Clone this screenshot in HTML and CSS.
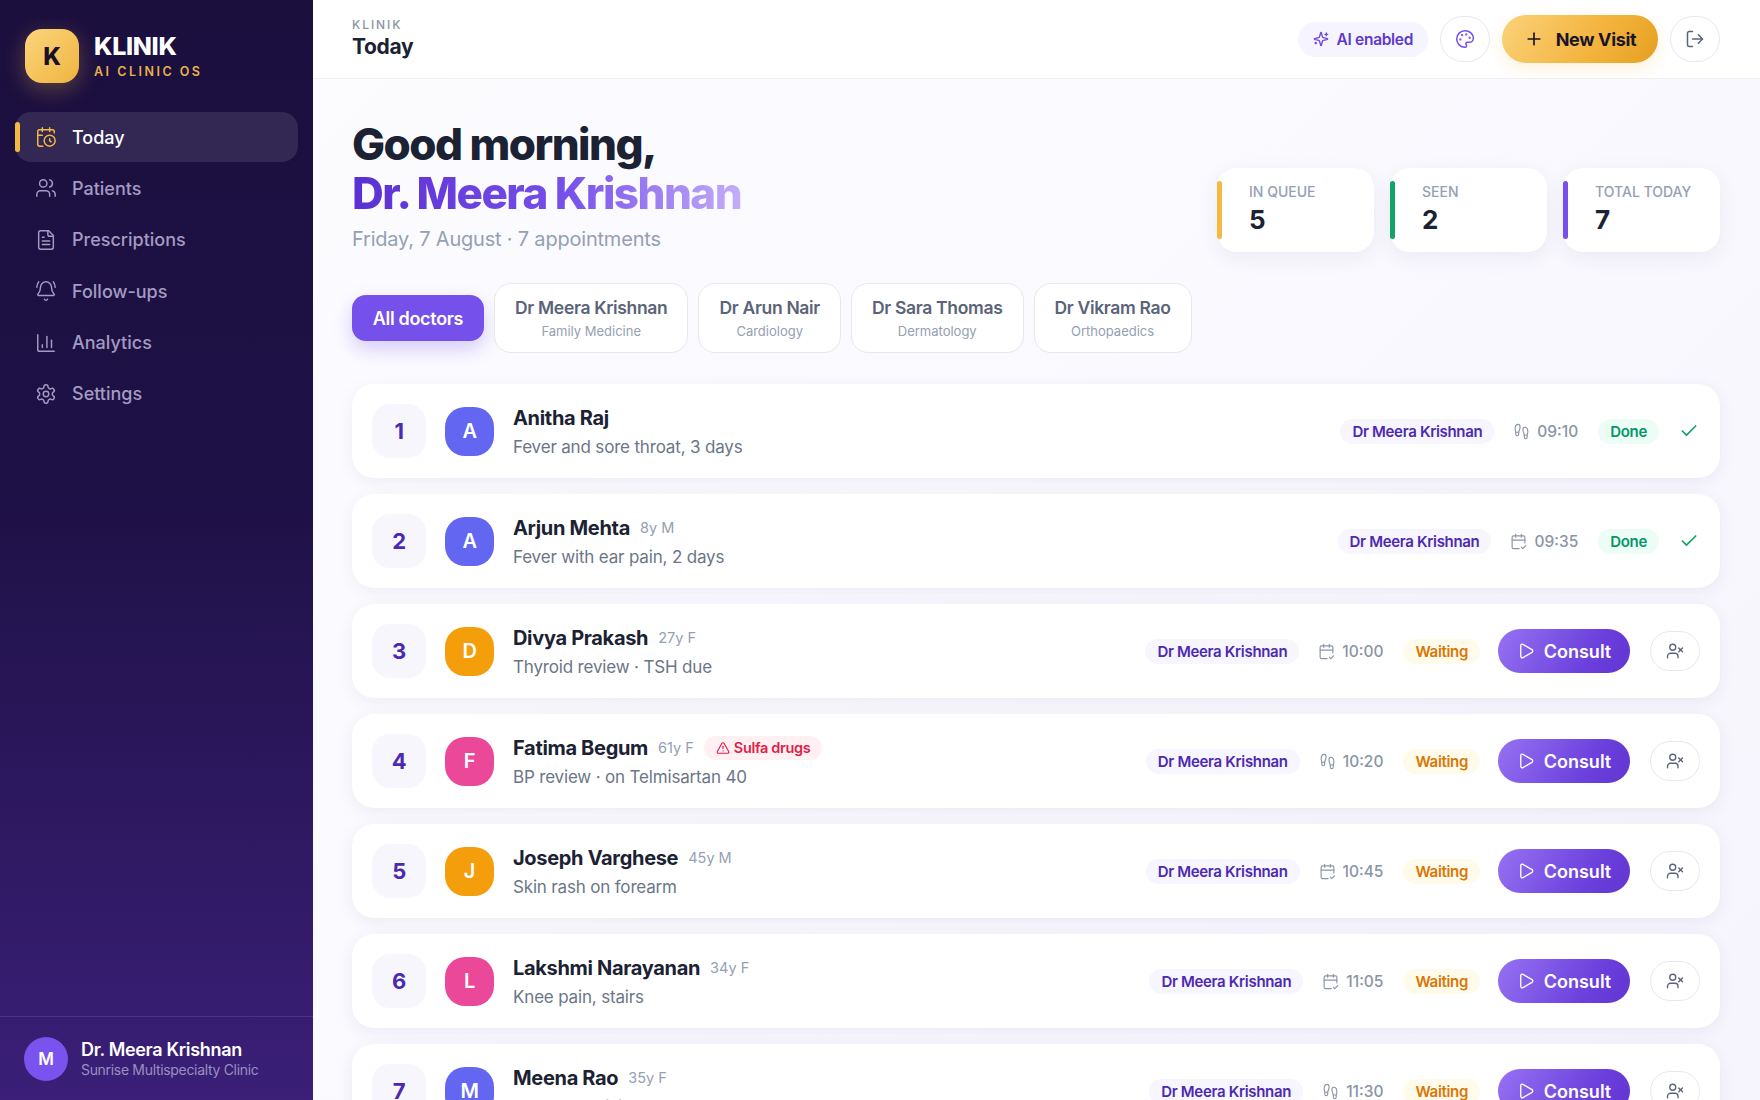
FILE: index.html
```html
<!DOCTYPE html>
<html>
<head>
    <title>Klinik - Today</title>
    <link rel="stylesheet" href="styles.css">
</head>
<body>
    <svg class="icon-defs" width="0" height="0">
        <symbol id="i-today" viewBox="0 0 24 24"><path d="M16 14v2.2l1.6 1"/><path d="M16 2v4"/><path d="M21 7.5V6a2 2 0 0 0-2-2H5a2 2 0 0 0-2 2v14a2 2 0 0 0 2 2h3.5"/><path d="M3 10h5"/><path d="M8 2v4"/><circle cx="16" cy="16" r="6"/></symbol>
        <symbol id="i-users" viewBox="0 0 24 24"><path d="M16 21v-2a4 4 0 0 0-4-4H6a4 4 0 0 0-4 4v2"/><path d="M16 3.128a4 4 0 0 1 0 7.744"/><path d="M22 21v-2a4 4 0 0 0-3-3.87"/><circle cx="9" cy="7" r="4"/></symbol>
        <symbol id="i-file" viewBox="0 0 24 24"><path d="M15 2H6a2 2 0 0 0-2 2v16a2 2 0 0 0 2 2h12a2 2 0 0 0 2-2V7Z"/><path d="M14 2v4a2 2 0 0 0 2 2h4"/><path d="M10 9H8"/><path d="M16 13H8"/><path d="M16 17H8"/></symbol>
        <symbol id="i-bell" viewBox="0 0 24 24"><path d="M10.268 21a2 2 0 0 0 3.464 0"/><path d="M22 8c0-2.3-.8-4.3-2-6"/><path d="M3.262 15.326A1 1 0 0 0 4 17h16a1 1 0 0 0 .74-1.673C19.41 13.956 18 12.499 18 8A6 6 0 0 0 6 8c0 4.499-1.411 5.956-2.738 7.326"/><path d="M4 2C2.8 3.7 2 5.7 2 8"/></symbol>
        <symbol id="i-chart" viewBox="0 0 24 24"><path d="M3 3v16a2 2 0 0 0 2 2h16"/><path d="M18 17V9"/><path d="M13 17V5"/><path d="M8 17v-3"/></symbol>
        <symbol id="i-gear" viewBox="0 0 24 24"><path d="M12.22 2h-.44a2 2 0 0 0-2 2v.18a2 2 0 0 1-1 1.73l-.43.25a2 2 0 0 1-2 0l-.15-.08a2 2 0 0 0-2.73.73l-.22.38a2 2 0 0 0 .73 2.73l.15.1a2 2 0 0 1 1 1.72v.51a2 2 0 0 1-1 1.74l-.15.09a2 2 0 0 0-.73 2.73l.22.38a2 2 0 0 0 2.73.73l.15-.08a2 2 0 0 1 2 0l.43.25a2 2 0 0 1 1 1.73V20a2 2 0 0 0 2 2h.44a2 2 0 0 0 2-2v-.18a2 2 0 0 1 1-1.73l.43-.25a2 2 0 0 1 2 0l.15.08a2 2 0 0 0 2.73-.73l.22-.39a2 2 0 0 0-.73-2.73l-.15-.08a2 2 0 0 1-1-1.74v-.5a2 2 0 0 1 1-1.74l.15-.09a2 2 0 0 0 .73-2.73l-.22-.38a2 2 0 0 0-2.73-.73l-.15.08a2 2 0 0 1-2 0l-.43-.25a2 2 0 0 1-1-1.73V4a2 2 0 0 0-2-2z"/><circle cx="12" cy="12" r="3"/></symbol>
        <symbol id="i-sparkles" viewBox="0 0 24 24"><path d="M9.937 15.5A2 2 0 0 0 8.5 14.063l-6.135-1.582a.5.5 0 0 1 0-.962L8.5 9.936A2 2 0 0 0 9.937 8.5l1.582-6.135a.5.5 0 0 1 .963 0L14.063 8.5A2 2 0 0 0 15.5 9.937l6.135 1.581a.5.5 0 0 1 0 .964L15.5 14.063a2 2 0 0 0-1.437 1.437l-1.582 6.135a.5.5 0 0 1-.963 0z"/><path d="M20 3v4"/><path d="M22 5h-4"/><path d="M4 17v2"/><path d="M5 18H3"/></symbol>
        <symbol id="i-palette" viewBox="0 0 24 24"><path d="M12 22a1 1 0 0 1 0-20 10 9 0 0 1 10 9 5 5 0 0 1-5 5h-2.25a1.75 1.75 0 0 0-1.4 2.8l.3.4a1.75 1.75 0 0 1-1.4 2.8z"/><circle cx="13.5" cy="6.5" r=".5" fill="currentColor"/><circle cx="17.5" cy="10.5" r=".5" fill="currentColor"/><circle cx="6.5" cy="12.5" r=".5" fill="currentColor"/><circle cx="8.5" cy="7.5" r=".5" fill="currentColor"/></symbol>
        <symbol id="i-plus" viewBox="0 0 24 24"><path d="M5 12h14"/><path d="M12 5v14"/></symbol>
        <symbol id="i-logout" viewBox="0 0 24 24"><path d="m16 17 5-5-5-5"/><path d="M21 12H9"/><path d="M9 21H5a2 2 0 0 1-2-2V5a2 2 0 0 1 2-2h4"/></symbol>
        <symbol id="i-steps" viewBox="0 0 24 24"><path d="M4 16v-2.38C4 11.5 2.97 10.5 3 8c.03-2.72 1.49-6 4.5-6C9.37 2 10 3.8 10 5.5c0 3.11-2 5.66-2 8.68V16a2 2 0 1 1-4 0Z"/><path d="M20 20v-2.38c0-2.12 1.03-3.12 1-5.62-.03-2.72-1.49-6-4.5-6C14.63 6 14 7.8 14 9.5c0 3.11 2 5.66 2 8.68V20a2 2 0 1 0 4 0Z"/><path d="M16 17h4"/><path d="M4 13h4"/></symbol>
        <symbol id="i-booked" viewBox="0 0 24 24"><path d="M8 2v4"/><path d="M16 2v4"/><path d="M21 14V6a2 2 0 0 0-2-2H5a2 2 0 0 0-2 2v14a2 2 0 0 0 2 2h8"/><path d="M3 10h18"/><path d="m16 20 2 2 4-4"/></symbol>
        <symbol id="i-check" viewBox="0 0 24 24"><path d="M20 6 9 17l-5-5"/></symbol>
        <symbol id="i-play" viewBox="0 0 24 24"><path d="M5 5a2 2 0 0 1 3.008-1.728l11.997 6.998a2 2 0 0 1 .003 3.458l-12 7A2 2 0 0 1 5 19z"/></symbol>
        <symbol id="i-userx" viewBox="0 0 24 24"><path d="M16 21v-2a4 4 0 0 0-4-4H6a4 4 0 0 0-4 4v2"/><circle cx="9" cy="7" r="4"/><line x1="17" x2="22" y1="8" y2="13"/><line x1="22" x2="17" y1="8" y2="13"/></symbol>
        <symbol id="i-alert" viewBox="0 0 24 24"><path d="m21.73 18-8-14a2 2 0 0 0-3.48 0l-8 14A2 2 0 0 0 4 21h16a2 2 0 0 0 1.73-3"/><path d="M12 9v4"/><path d="M12 17h.01"/></symbol>
    </svg>

    <aside class="sidebar">
        <div class="brand">
            <div class="brand-logo">K</div>
            <div>
                <div class="brand-name">KLINIK</div>
                <div class="brand-tag">AI CLINIC OS</div>
            </div>
        </div>
        <nav class="nav">
            <a class="nav-item nav-active"><svg class="icon nav-icon"><use href="#i-today"/></svg>Today</a>
            <a class="nav-item"><svg class="icon nav-icon"><use href="#i-users"/></svg>Patients</a>
            <a class="nav-item"><svg class="icon nav-icon"><use href="#i-file"/></svg>Prescriptions</a>
            <a class="nav-item"><svg class="icon nav-icon"><use href="#i-bell"/></svg>Follow-ups</a>
            <a class="nav-item"><svg class="icon nav-icon"><use href="#i-chart"/></svg>Analytics</a>
            <a class="nav-item"><svg class="icon nav-icon"><use href="#i-gear"/></svg>Settings</a>
        </nav>
        <div class="side-user">
            <div class="side-avatar">M</div>
            <div>
                <div class="side-name">Dr. Meera Krishnan</div>
                <div class="side-clinic">Sunrise Multispecialty Clinic</div>
            </div>
        </div>
    </aside>

    <div class="main">
        <header class="topbar">
            <div class="topbar-title">
                <div class="kicker">KLINIK</div>
                <div class="page-name">Today</div>
            </div>
            <div class="topbar-actions">
                <div class="ai-pill"><svg class="icon icon-sm"><use href="#i-sparkles"/></svg>AI enabled</div>
                <button class="round-btn palette-btn"><svg class="icon icon-md"><use href="#i-palette"/></svg></button>
                <button class="new-visit"><svg class="icon icon-plus"><use href="#i-plus"/></svg>New Visit</button>
                <button class="round-btn"><svg class="icon icon-md"><use href="#i-logout"/></svg></button>
            </div>
        </header>

        <main class="content">
            <section class="hero">
                <div>
                    <h1 class="greeting">Good morning,<br><span class="greeting-name">Dr. Meera Krishnan</span></h1>
                    <div class="hero-sub">Friday, 7 August · 7 appointments</div>
                </div>
                <div class="stats">
                    <div class="stat stat-gold"><div class="stat-label">IN QUEUE</div><div class="stat-value">5</div></div>
                    <div class="stat stat-green"><div class="stat-label">SEEN</div><div class="stat-value">2</div></div>
                    <div class="stat stat-violet"><div class="stat-label">TOTAL TODAY</div><div class="stat-value">7</div></div>
                </div>
            </section>

            <section class="doctor-chips">
                <button class="chip-all">All doctors</button>
                <button class="chip"><span class="chip-name">Dr Meera Krishnan</span><span class="chip-spec">Family Medicine</span></button>
                <button class="chip"><span class="chip-name">Dr Arun Nair</span><span class="chip-spec">Cardiology</span></button>
                <button class="chip"><span class="chip-name">Dr Sara Thomas</span><span class="chip-spec">Dermatology</span></button>
                <button class="chip"><span class="chip-name">Dr Vikram Rao</span><span class="chip-spec">Orthopaedics</span></button>
            </section>

            <section class="queue">
                <div class="row">
                    <div class="row-num">1</div>
                    <div class="row-avatar av-indigo">A</div>
                    <div class="row-info">
                        <div class="row-head"><span class="row-name">Anitha Raj</span></div>
                        <div class="row-reason">Fever and sore throat, 3 days</div>
                    </div>
                    <div class="doc-pill">Dr Meera Krishnan</div>
                    <div class="row-time"><svg class="icon icon-time"><use href="#i-steps"/></svg>09:10</div>
                    <div class="status status-done">Done</div>
                    <svg class="icon row-check"><use href="#i-check"/></svg>
                </div>
                <div class="row">
                    <div class="row-num">2</div>
                    <div class="row-avatar av-indigo">A</div>
                    <div class="row-info">
                        <div class="row-head"><span class="row-name">Arjun Mehta</span><span class="row-age">8y M</span></div>
                        <div class="row-reason">Fever with ear pain, 2 days</div>
                    </div>
                    <div class="doc-pill">Dr Meera Krishnan</div>
                    <div class="row-time"><svg class="icon icon-time"><use href="#i-booked"/></svg>09:35</div>
                    <div class="status status-done">Done</div>
                    <svg class="icon row-check"><use href="#i-check"/></svg>
                </div>
                <div class="row">
                    <div class="row-num">3</div>
                    <div class="row-avatar av-amber">D</div>
                    <div class="row-info">
                        <div class="row-head"><span class="row-name">Divya Prakash</span><span class="row-age">27y F</span></div>
                        <div class="row-reason">Thyroid review · TSH due</div>
                    </div>
                    <div class="doc-pill">Dr Meera Krishnan</div>
                    <div class="row-time"><svg class="icon icon-time"><use href="#i-booked"/></svg>10:00</div>
                    <div class="status status-waiting">Waiting</div>
                    <button class="consult"><svg class="icon icon-play"><use href="#i-play"/></svg>Consult</button>
                    <button class="noshow"><svg class="icon icon-noshow"><use href="#i-userx"/></svg></button>
                </div>
                <div class="row">
                    <div class="row-num">4</div>
                    <div class="row-avatar av-pink">F</div>
                    <div class="row-info">
                        <div class="row-head"><span class="row-name">Fatima Begum</span><span class="row-age">61y F</span><span class="allergy"><svg class="icon icon-alert"><use href="#i-alert"/></svg>Sulfa drugs</span></div>
                        <div class="row-reason">BP review · on Telmisartan 40</div>
                    </div>
                    <div class="doc-pill">Dr Meera Krishnan</div>
                    <div class="row-time"><svg class="icon icon-time"><use href="#i-steps"/></svg>10:20</div>
                    <div class="status status-waiting">Waiting</div>
                    <button class="consult"><svg class="icon icon-play"><use href="#i-play"/></svg>Consult</button>
                    <button class="noshow"><svg class="icon icon-noshow"><use href="#i-userx"/></svg></button>
                </div>
                <div class="row">
                    <div class="row-num">5</div>
                    <div class="row-avatar av-amber">J</div>
                    <div class="row-info">
                        <div class="row-head"><span class="row-name">Joseph Varghese</span><span class="row-age">45y M</span></div>
                        <div class="row-reason">Skin rash on forearm</div>
                    </div>
                    <div class="doc-pill">Dr Meera Krishnan</div>
                    <div class="row-time"><svg class="icon icon-time"><use href="#i-booked"/></svg>10:45</div>
                    <div class="status status-waiting">Waiting</div>
                    <button class="consult"><svg class="icon icon-play"><use href="#i-play"/></svg>Consult</button>
                    <button class="noshow"><svg class="icon icon-noshow"><use href="#i-userx"/></svg></button>
                </div>
                <div class="row">
                    <div class="row-num">6</div>
                    <div class="row-avatar av-pink">L</div>
                    <div class="row-info">
                        <div class="row-head"><span class="row-name">Lakshmi Narayanan</span><span class="row-age">34y F</span></div>
                        <div class="row-reason">Knee pain, stairs</div>
                    </div>
                    <div class="doc-pill">Dr Meera Krishnan</div>
                    <div class="row-time"><svg class="icon icon-time"><use href="#i-booked"/></svg>11:05</div>
                    <div class="status status-waiting">Waiting</div>
                    <button class="consult"><svg class="icon icon-play"><use href="#i-play"/></svg>Consult</button>
                    <button class="noshow"><svg class="icon icon-noshow"><use href="#i-userx"/></svg></button>
                </div>
                <div class="row">
                    <div class="row-num">7</div>
                    <div class="row-avatar av-indigo">M</div>
                    <div class="row-info">
                        <div class="row-head"><span class="row-name">Meena Rao</span><span class="row-age">35y F</span></div>
                        <div class="row-reason">Follow-up visit</div>
                    </div>
                    <div class="doc-pill">Dr Meera Krishnan</div>
                    <div class="row-time"><svg class="icon icon-time"><use href="#i-steps"/></svg>11:30</div>
                    <div class="status status-waiting">Waiting</div>
                    <button class="consult"><svg class="icon icon-play"><use href="#i-play"/></svg>Consult</button>
                    <button class="noshow"><svg class="icon icon-noshow"><use href="#i-userx"/></svg></button>
                </div>
            </section>
        </main>
    </div>
</body>
</html>
```

FILE: styles.css
```css
* {
    box-sizing: border-box;
}

html, body {
    height: 100%;
}

body {
    margin: 0;
    display: flex;
    overflow: hidden;
    font-family: "Inter", "Liberation Sans", sans-serif;
    letter-spacing: -0.02em;
    color: #1a2233;
    background: #f9f9fe;
}

button {
    font-family: inherit;
    letter-spacing: inherit;
    border: none;
    padding: 0;
}

.icon-defs {
    position: absolute;
}

.icon {
    fill: none;
    stroke: currentColor;
    stroke-width: 2;
    stroke-linecap: round;
    stroke-linejoin: round;
    flex: none;
}

/* sidebar */
.sidebar {
    width: 313px;
    flex: none;
    display: flex;
    flex-direction: column;
    background: linear-gradient(180deg, #1b0f3e 0%, #1e1146 45%, #3b1f78 100%);
}

.brand {
    display: flex;
    align-items: center;
    gap: 15px;
    padding: 29px 25px 0;
}

.brand-logo {
    width: 54px;
    height: 54px;
    border-radius: 17px;
    display: flex;
    align-items: center;
    justify-content: center;
    font-size: 24px;
    font-weight: 800;
    color: #1a1128;
    background: linear-gradient(135deg, #fbd57c, #f0b440);
    box-shadow: 0 6px 22px rgba(245, 185, 66, 0.3);
}

.brand-name {
    font-size: 25px;
    line-height: 28px;
    font-weight: 800;
    color: #fff;
}

.brand-tag {
    margin-top: 4px;
    font-size: 12.5px;
    line-height: 16px;
    font-weight: 600;
    letter-spacing: 0.2em;
    color: #e9b04a;
}

.nav {
    display: flex;
    flex-direction: column;
    gap: 1.4px;
    margin-top: 29px;
    padding: 0 15px;
}

.nav-item {
    position: relative;
    height: 50px;
    display: flex;
    align-items: center;
    gap: 15px;
    padding-left: 20px;
    border-radius: 16px;
    font-size: 18px;
    font-weight: 500;
    letter-spacing: 0;
    color: #a39bc2;
}

.nav-icon {
    width: 22px;
    height: 22px;
    stroke-width: 1.6;
}

.nav-active {
    color: #fff;
    background: rgba(255, 255, 255, 0.1);
}

.nav-active .nav-icon {
    color: #f5b942;
}

.nav-active::before {
    content: "";
    position: absolute;
    left: 0;
    top: 10px;
    bottom: 10px;
    width: 5px;
    border-radius: 3px;
    background: #f5b942;
}

.side-user {
    margin-top: auto;
    height: 84px;
    display: flex;
    align-items: center;
    gap: 13px;
    padding: 0 24px;
    border-top: 1px solid rgba(255, 255, 255, 0.1);
}

.side-avatar {
    width: 44px;
    height: 44px;
    border-radius: 50%;
    display: flex;
    align-items: center;
    justify-content: center;
    font-size: 17px;
    font-weight: 600;
    color: #fff;
    background: #7a52ee;
}

.side-name {
    font-size: 18px;
    line-height: 22px;
    font-weight: 600;
    color: #fff;
}

.side-clinic {
    font-size: 14px;
    line-height: 18px;
    color: #9a8fc0;
}

/* top bar */
.main {
    flex: 1;
    min-width: 0;
    display: flex;
    flex-direction: column;
}

.topbar {
    height: 79px;
    flex: none;
    display: flex;
    align-items: center;
    justify-content: space-between;
    padding: 0 40px 0 39px;
    background: #fff;
    border-bottom: 1px solid #eff0f5;
}

.kicker {
    font-size: 12px;
    line-height: 14px;
    font-weight: 500;
    letter-spacing: 0.16em;
    color: #8a94a6;
}

.page-name {
    margin-top: 2px;
    font-size: 21px;
    line-height: 26px;
    font-weight: 700;
}

.topbar-actions {
    display: flex;
    align-items: center;
    gap: 12px;
}

.ai-pill {
    height: 35px;
    display: flex;
    align-items: center;
    gap: 8px;
    padding: 0 15px;
    border-radius: 18px;
    font-size: 15.5px;
    font-weight: 600;
    color: #5f38cf;
    background: #f6f4fe;
}

.icon-sm {
    width: 16px;
    height: 16px;
    color: #6d45e0;
}

.round-btn {
    width: 50px;
    height: 46px;
    display: flex;
    align-items: center;
    justify-content: center;
    border: 1px solid #e6e8ee;
    border-radius: 23px;
    background: #fff;
    color: #5a6478;
}

.palette-btn {
    color: #7650ea;
}

.icon-md {
    width: 20px;
    height: 20px;
    stroke-width: 1.8;
}

.new-visit {
    width: 156px;
    height: 48px;
    display: flex;
    align-items: center;
    justify-content: center;
    gap: 12px;
    border-radius: 24px;
    font-size: 18px;
    font-weight: 700;
    color: #1a1428;
    background: linear-gradient(120deg, #fbd27a, #f3b33d 60%, #e5a020);
    box-shadow: 0 6px 16px rgba(245, 185, 66, 0.18);
}

.icon-plus {
    width: 20px;
    height: 20px;
}

/* content */
.content {
    flex: 1;
    min-height: 0;
    padding: 41px 40px 0 39px;
    background: linear-gradient(135deg, #fcfcff, #f6f5fd);
}

.hero {
    display: flex;
    align-items: flex-end;
    justify-content: space-between;
}

.greeting {
    margin: 0;
    font-size: 44px;
    line-height: 48.5px;
    font-weight: 800;
    letter-spacing: -0.035em;
    color: #1a2233;
}

.greeting-name {
    background: linear-gradient(90deg, #5b30d2 0%, #7650ea 55%, #c3adf8 100%);
    -webkit-background-clip: text;
    background-clip: text;
    color: transparent;
}

.hero-sub {
    margin-top: 9px;
    font-size: 20px;
    line-height: 26px;
    letter-spacing: -0.01em;
    color: #94a0b4;
}

.stats {
    display: flex;
    gap: 16px;
}

.stat {
    position: relative;
    min-width: 157px;
    height: 84px;
    padding: 14px 28px 0 32px;
    border-radius: 20px;
    background: #fff;
    box-shadow: 0 6px 20px rgba(60, 50, 120, 0.07);
}

.stat::before {
    content: "";
    position: absolute;
    left: 0;
    top: 13px;
    bottom: 13px;
    width: 5px;
    border-radius: 3px;
}

.stat-gold::before { background: #f5b942; }
.stat-green::before { background: #12a366; }
.stat-violet::before { background: #7650ea; }

.stat-label {
    font-size: 14px;
    line-height: 20px;
    font-weight: 500;
    letter-spacing: 0;
    color: #94a0b4;
}

.stat-value {
    margin-top: 2px;
    font-size: 26px;
    line-height: 32px;
    font-weight: 700;
}

/* doctor filter */
.doctor-chips {
    display: flex;
    align-items: center;
    gap: 10px;
    margin-top: 31px;
}

.chip-all {
    width: 132px;
    height: 46px;
    border-radius: 14px;
    font-size: 18px;
    font-weight: 600;
    color: #fff;
    background: #7650ea;
    box-shadow: 0 8px 20px rgba(118, 80, 234, 0.28);
}

.chip {
    height: 70px;
    display: flex;
    flex-direction: column;
    align-items: center;
    justify-content: center;
    gap: 4px;
    padding: 0 20px;
    border: 1px solid #e6e8ee;
    border-radius: 17px;
    background: #fff;
}

.chip-name {
    font-size: 17.5px;
    line-height: 22px;
    font-weight: 600;
    color: #5a6478;
}

.chip-spec {
    font-size: 13px;
    line-height: 17px;
    letter-spacing: 0;
    color: #94a0b4;
}

/* queue */
.queue {
    display: flex;
    flex-direction: column;
    gap: 16px;
    margin-top: 31px;
}

.row {
    flex: none;
    height: 94px;
    display: flex;
    align-items: center;
    padding: 0 20px;
    border-radius: 22px;
    background: #fff;
    box-shadow: 0 4px 16px rgba(60, 50, 120, 0.07);
}

.row-num {
    width: 54px;
    height: 54px;
    flex: none;
    display: flex;
    align-items: center;
    justify-content: center;
    border-radius: 18px;
    font-size: 22px;
    font-weight: 700;
    color: #4c2ab0;
    background: #f7f6fc;
}

.row-avatar {
    width: 49px;
    height: 49px;
    flex: none;
    margin-left: 19px;
    display: flex;
    align-items: center;
    justify-content: center;
    border-radius: 20px;
    font-size: 20px;
    font-weight: 600;
    color: #fff;
}

.av-indigo { background: #6366f1; }
.av-amber { background: #f59e0b; }
.av-pink { background: #ec4899; }

.row-info {
    flex: 1;
    min-width: 0;
    margin-left: 19px;
}

.row-head {
    display: flex;
    align-items: center;
    gap: 10px;
    height: 28px;
}

.row-name {
    font-size: 20px;
    font-weight: 700;
}

.row-age {
    font-size: 14.5px;
    letter-spacing: 0;
    color: #94a0b4;
}

.allergy {
    height: 24px;
    display: flex;
    align-items: center;
    gap: 4px;
    padding: 0 12px;
    border-radius: 12px;
    font-size: 14.5px;
    font-weight: 600;
    color: #e11d48;
    background: #fff1f3;
}

.icon-alert {
    width: 14px;
    height: 14px;
}

.row-reason {
    margin-top: 3px;
    font-size: 17px;
    line-height: 24px;
    letter-spacing: -0.01em;
    color: #6b7688;
}

.doc-pill {
    height: 25px;
    display: flex;
    align-items: center;
    padding: 0 12px;
    border-radius: 13px;
    font-size: 15px;
    font-weight: 600;
    color: #4c2ab0;
    background: #f7f5fd;
}

.row-time {
    display: flex;
    align-items: center;
    gap: 7px;
    margin-left: 19px;
    font-size: 15.5px;
    font-weight: 500;
    letter-spacing: 0;
    color: #8a94a6;
}

.icon-time {
    width: 17px;
    height: 17px;
    stroke-width: 1.6;
}

.status {
    height: 25px;
    display: flex;
    align-items: center;
    margin-left: 20px;
    padding: 0 12px;
    border-radius: 13px;
    font-size: 15px;
    font-weight: 600;
}

.status-done {
    color: #059669;
    background: #ecfdf5;
}

.status-waiting {
    color: #d97706;
    background: #fffbeb;
}

.row-check {
    width: 20px;
    height: 20px;
    margin: 0 1px 0 20px;
    color: #12a366;
}

.consult {
    width: 132px;
    height: 44px;
    margin-left: 18px;
    display: flex;
    align-items: center;
    justify-content: center;
    gap: 9px;
    border-radius: 22px;
    font-size: 18px;
    font-weight: 600;
    letter-spacing: 0;
    color: #fff;
    background: linear-gradient(120deg, #9672f2, #6a3fdc 70%, #6235d0);
}

.icon-play {
    width: 18px;
    height: 18px;
    stroke-width: 1.8;
}

.noshow {
    width: 50px;
    height: 40px;
    margin-left: 20px;
    display: flex;
    align-items: center;
    justify-content: center;
    border: 1px solid #e6e8ee;
    border-radius: 20px;
    background: #fff;
    color: #5a6478;
}

.icon-noshow {
    width: 18px;
    height: 18px;
    stroke-width: 1.8;
}
```
